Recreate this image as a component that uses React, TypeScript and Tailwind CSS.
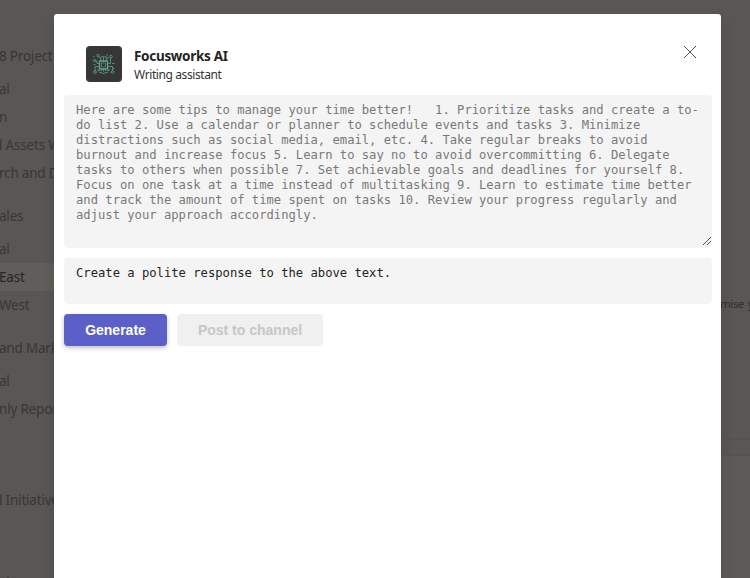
import React from "react";

type Row = { text: string; gap: string; active?: boolean };

const rows: Row[] = [
  { text: "8 Project", gap: "mt-[42px]" },
  { text: "al", gap: "mt-[5px]" },
  { text: "n", gap: "mt-0" },
  { text: "l Assets W", gap: "mt-0" },
  { text: "rch and D", gap: "mt-0" },
  { text: "ales", gap: "mt-[15px]" },
  { text: "al", gap: "mt-[5px]" },
  { text: "East", gap: "mt-0", active: true },
  { text: "West", gap: "mt-0" },
  { text: "and Marketing", gap: "mt-[15px]" },
  { text: "al", gap: "mt-[5px]" },
  { text: "nly Reports", gap: "mt-0" },
  { text: "l Initiatives", gap: "mt-[63px]" },
  { text: "al", gap: "mt-[55px]" },
];

function Sidebar() {
  return (
    <nav className="h-full w-[178px] shrink-0 overflow-hidden bg-[#595754] shadow-[1px_0_3px_rgba(0,0,0,0.12)]">
      {rows.map((r, i) => (
        <div
          key={i}
          className={`-indent-px flex h-7 items-center whitespace-nowrap text-[13.5px] tracking-[-0.2px] ${r.gap} ${
            r.active ? "bg-[#605e5b] text-[#252423]" : "text-[#373635]"
          }`}
        >
          {r.text}
        </div>
      ))}
    </nav>
  );
}

function AppLogo() {
  return (
    <svg
      className="h-9 w-9 shrink-0 rounded bg-[#363636]"
      viewBox="0 0 36 36"
      fill="none"
      stroke="#5fa58c"
      strokeWidth="0.8"
    >
      <rect x="13.500" y="15" width="8" height="8" rx="0.5" strokeWidth="1.3" />
      <rect x="15.500" y="17" width="4" height="4" strokeWidth="0.6" />
      <path d="M14.500 15V12.500L12.500 10.500M17.500 15V11M20.500 15V12.500L23 11.500M15.500 23V25M17.500 23V25.500M19.500 23V25" />
      <path d="M13.500 17.500H11V15H9M13.500 20.500H9V25M21.500 17.500H24.500V12M21.500 20.500H26.500V25M12 22.500V24.500H14M23 22.500V24.500H21" />
      <path d="M13.500 11.500Q17.500 9.500 21.500 11.500M13 26Q17.500 29 22 26" />
      <circle cx="8.500" cy="14.500" r="1.200" />
      <circle cx="12" cy="9.500" r="1.200" />
      <circle cx="25" cy="10.500" r="1.300" />
      <circle cx="9" cy="26" r="1.400" />
      <circle cx="26.500" cy="26" r="1.400" />
      <path d="M7 10.500h1.500M20.500 9h1.500M7.500 18.500h2M26 17.500h2.500M27 22.500h1.500" />
    </svg>
  );
}

function ResizeGrip() {
  return (
    <svg
      className="pointer-events-none absolute bottom-[3px] right-[1px] h-2 w-2"
      viewBox="0 0 8 8"
      stroke="#424242"
      strokeWidth="0.9"
    >
      <path d="M0 8L8 0M4 8L8 4" />
    </svg>
  );
}

export default function App() {
  return (
    <div className="relative h-[578px] w-[750px] overflow-hidden bg-[#595754] font-['Noto_Sans','Open_Sans',sans-serif]">
      <div className="flex h-full">
        <Sidebar />
        <main className="flex min-w-0 flex-1 flex-col bg-[#595754]">
          <div className="flex h-[439px] items-start justify-end pt-[295px]">
            <span className="w-[30px] whitespace-nowrap text-[11.5px] leading-[18px] tracking-[-0.5px] text-[#2f2e2d] [word-spacing:1.5px]">
              mise y
            </span>
          </div>
          <div className="h-[17px] border-y border-[#555350]" />
          <div className="flex-1 bg-[#5c5a57]" />
        </main>
      </div>

      <section className="absolute left-[54px] top-[14px] flex h-[600px] w-[667px] flex-col rounded-[3px] bg-white px-[10px] shadow-[0_6px_14px_rgba(0,0,0,0.1)]">
        <header className="flex h-[81px] shrink-0 items-start pl-[22px] pt-8">
          <AppLogo />
          <div className="ml-3 whitespace-nowrap text-[#242424]">
            <h1 className="text-[13.5px] font-bold leading-5 tracking-[-0.3px]">Focusworks AI</h1>
            <p className="text-[12px] leading-[17px] tracking-[-0.4px] text-[#333333]">Writing assistant</p>
          </div>
          <button className="ml-auto mr-[15px]" aria-label="Close">
            <svg className="h-3 w-3" viewBox="0 0 12 12" stroke="#555555" strokeWidth="1">
              <path d="M0 0L12 12M12 0L0 12" />
            </svg>
          </button>
        </header>

        <div className="relative h-[153px] w-[648px] shrink-0">
          <textarea
            readOnly
            className="block h-full w-full resize-none rounded bg-[#f4f4f4] px-3 py-2 font-['DejaVu_Sans_Mono',monospace] text-[12.18px] leading-[15px] text-[#797979] outline-none"
            value="Here are some tips to manage your time better!   1. Prioritize tasks and create a to-do list 2. Use a calendar or planner to schedule events and tasks 3. Minimize distractions such as social media, email, etc. 4. Take regular breaks to avoid burnout and increase focus 5. Learn to say no to avoid overcommitting 6. Delegate tasks to others when possible 7. Set achievable goals and deadlines for yourself 8. Focus on one task at a time instead of multitasking 9. Learn to estimate time better and track the amount of time spent on tasks 10. Review your progress regularly and adjust your approach accordingly."
          />
          <ResizeGrip />
        </div>
        <textarea
          readOnly
          className="mt-[10px] block h-[46px] w-[648px] shrink-0 resize-none rounded bg-[#f4f4f4] px-3 py-2 font-['DejaVu_Sans_Mono',monospace] text-[12.18px] leading-[15px] text-[#242424] outline-none"
          value="Create a polite response to the above text."
        />
        <div className="mt-[10px] flex gap-[10px] font-['Liberation_Sans',Arial,sans-serif] text-[14px] font-bold">
          <button className="h-8 w-[103px] rounded bg-[#5b5fc7] text-white shadow-[0_2px_4px_rgba(0,0,0,0.25)]">
            Generate
          </button>
          <button className="h-8 w-[146px] rounded bg-[#f0f0f0] text-[#c7c7c7]">Post to channel</button>
        </div>
      </section>
    </div>
  );
}
